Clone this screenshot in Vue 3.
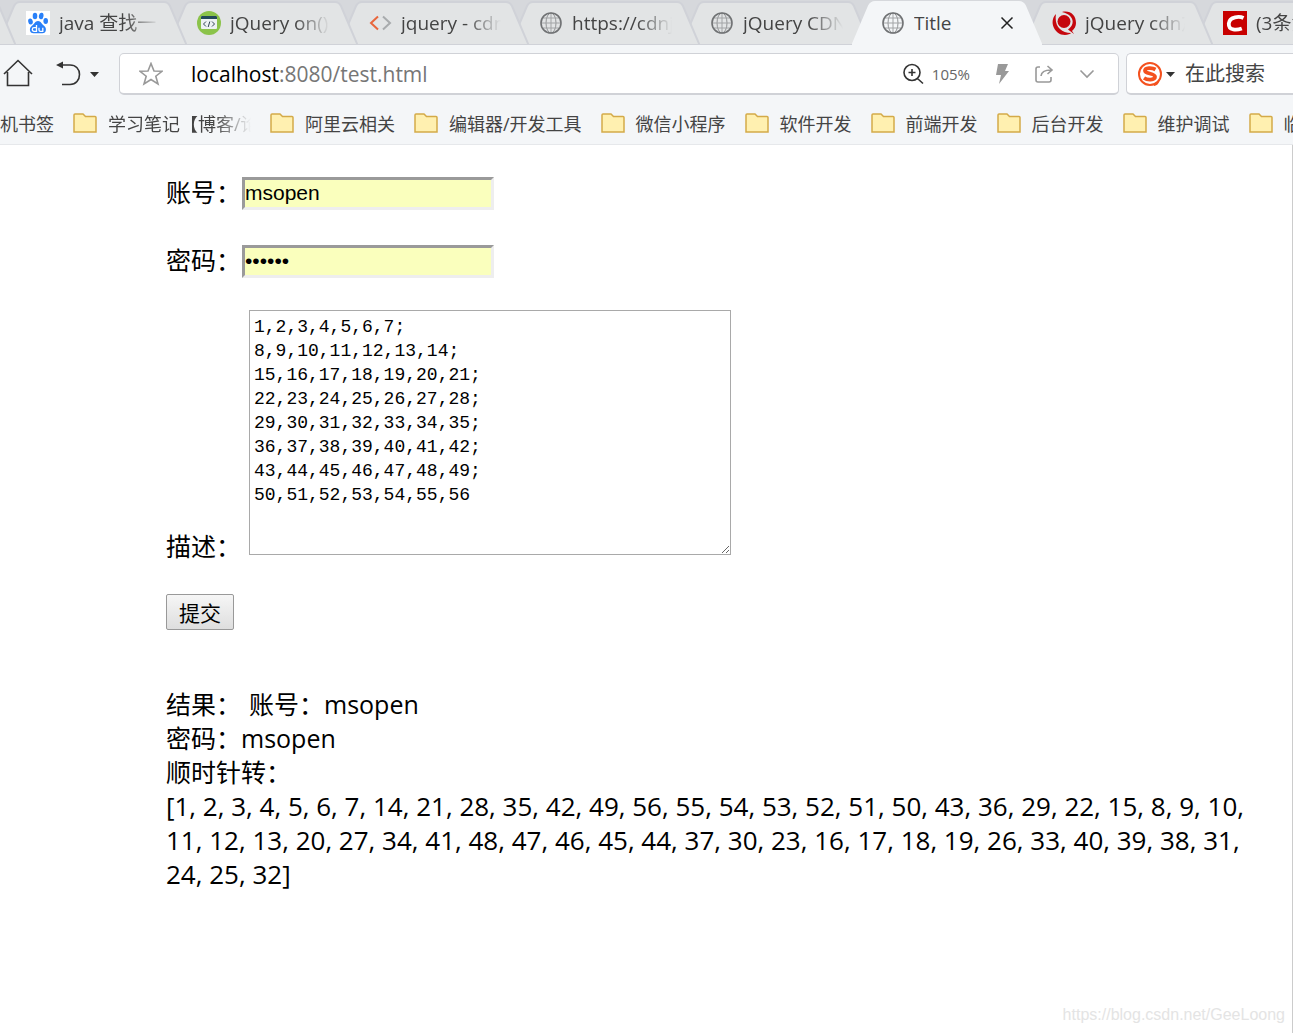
<template>
  <div class="browser">
    <nav class="tabs" aria-label="标签页">
      <a
        v-for="(tab, index) in tabs"
        :key="index"
        href="#"
        class="tab"
        :class="{ active: tab.active }"
        :style="{ zIndex: tab.active ? 20 : 10 - index }"
      >
        <svg class="tab-shape" viewBox="0 0 190 45" preserveAspectRatio="none">
          <path d="M0 46 L17 6 Q19 2 23 2 H167 Q171 2 173 6 L190 46" />
          <path v-if="!tab.active" class="tab-line" d="M0 44.500 H190" />
        </svg>

        <svg v-if="tab.icon === 'baidu'" class="tab-icon" viewBox="0 0 24 24">
          <rect width="24" height="24" fill="#fff" />
          <g fill="#2a80f8">
            <ellipse cx="4.500" cy="10.500" rx="2.300" ry="3" transform="rotate(-12 4.500 10.500)" />
            <ellipse cx="9" cy="5" rx="2.300" ry="3.200" />
            <ellipse cx="15.200" cy="5" rx="2.300" ry="3.200" transform="rotate(10 15.200 5)" />
            <ellipse cx="19.700" cy="10" rx="2.300" ry="3" />
            <path d="M12 10 C15 10 15.500 13 18 14.800 C21 17 20.500 22.300 16.500 22.300 H7.500 C3.300 22.300 2.800 17 6 14.800 C8.500 13 9 10 12 10Z" />
          </g>
          <path d="M10.500 14 V20.300 H8 Q6.300 20.300 6.300 18.500 Q6.300 16.700 8 16.700 H10.500 M13 16.700 V19 Q13 20.300 14.300 20.300 H16.800 V16.700" fill="none" stroke="#fff" stroke-width="1.300" />
        </svg>
        <svg v-else-if="tab.icon === 'code'" class="tab-icon" viewBox="0 0 24 24">
          <circle cx="12" cy="12" r="12" fill="#8bc34a" />
          <rect x="4" y="5" width="16" height="13" rx="1" fill="#eef2f3" />
          <path d="M4 8 V6 Q4 5 5 5 H19 Q20 5 20 6 V8Z" fill="#234a5a" />
          <path d="M9 10.500 L6.500 13 L9 15.500 M15 10.500 L17.500 13 L15 15.500 M12.800 10.500 L11.200 16" fill="none" stroke="#345" />
        </svg>
        <svg v-else-if="tab.icon === 'brackets'" class="tab-icon" viewBox="0 0 24 24">
          <path d="M10 5.500 L3 12 L10 18.500" fill="none" stroke="#e8663c" stroke-width="2" />
          <path d="M15 5.500 L22 12 L15 18.500" fill="none" stroke="#a8abad" stroke-width="2" />
        </svg>
        <svg v-else-if="tab.icon === 'globe'" class="tab-icon" viewBox="0 0 24 24" fill="none" stroke="#707274">
          <ellipse cx="12" cy="12" rx="5" ry="10" stroke="#929496" />
          <path d="M12 2 V22 M2 12 H22 M4 7 H20 M4 17 H20" stroke="#a2a4a6" />
          <circle cx="12" cy="12" r="10" stroke-width="1.600" />
        </svg>
        <svg v-else-if="tab.icon === 'runoob'" class="tab-icon" viewBox="0 0 24 24">
          <circle cx="12" cy="10.500" r="6.500" fill="#c5070d" />
          <path d="M4 3 C-2 9 0 19 9 23.500 C14 24.500 18 23.500 19 22 C9 22 2 15 4 3Z" fill="#c5070d" />
          <path d="M10 1 C18 -1 24 4 24 12 C24 15 22.500 18 20 20 L22 23 L16 18.500 C23 14 23 4 10 1Z" fill="#c5070d" />
        </svg>
        <svg v-else class="tab-icon" viewBox="0 0 24 24">
          <rect width="24" height="24" fill="#c80000" />
          <path d="M20.500 7 C17 5.300 6.500 5 5.800 12.500 C5.300 20 14 19.300 18.800 17.500" fill="none" stroke="#fff" stroke-width="3.800" />
        </svg>

        <span class="tab-title">{{ tab.title }}</span>
        <svg v-if="tab.active" class="tab-close" viewBox="0 0 14 14">
          <path d="M1.500 1.500 L12.500 12.500 M12.500 1.500 L1.500 12.500" />
        </svg>
      </a>
    </nav>

    <div class="toolbar">
      <button class="icon-button" aria-label="主页">
        <svg width="30" height="30" viewBox="0 0 30 30">
          <path d="M1 15 L15 1.500 L29 15 M4.500 13 V26.500 H25.500 V13" />
        </svg>
      </button>
      <button class="icon-button back" aria-label="后退">
        <svg width="44" height="30" viewBox="0 0 44 30">
          <path d="M3 6 H14 C20 6 23.500 10 23.500 15.500 C23.500 21 20 25.500 14 25.500 H6" />
          <path d="M0 6 L7 2.500 V9.500Z M34 13 H43 L38.500 18Z" class="filled" />
        </svg>
      </button>

      <div class="address">
        <button class="icon-button" aria-label="收藏">
          <svg width="24" height="24" viewBox="0 0 24 24" class="grey">
            <path d="M12 1.500 L15 9 L23 9.300 L16.800 14.200 L19 22 L12 17.500 L5 22 L7.200 14.200 L1 9.300 L9 9Z" />
          </svg>
        </button>
        <div class="url" role="textbox" contenteditable="true" spellcheck="false" aria-label="地址"><span class="host">localhost</span>:8080/test.html</div>
        <button class="zoom">
          <svg width="22" height="22" viewBox="0 0 22 22">
            <path d="M18 9.500 A8 8 0 1 1 2 9.500 A8 8 0 1 1 18 9.500 M15.500 15.500 L21 20.500 M10 6 V13 M6.500 9.500 H13.500" />
          </svg>
          105%
        </button>
        <button class="icon-button" aria-label="极速">
          <svg width="14" height="20" viewBox="0 0 14 20">
            <path d="M3 0 H13 L10 7 H14 L4 20 L6 11 H1Z" class="bolt" />
          </svg>
        </button>
        <button class="icon-button" aria-label="分享">
          <svg width="20" height="20" viewBox="0 0 20 20" class="grey">
            <path d="M6 3 H4 Q2 3 2 5 V16 Q2 18 4 18 H15 Q17 18 17 16 V13 M7 12 Q7.500 6 17 6 M13.500 2 L18 6 L13.500 10" />
          </svg>
        </button>
        <button class="icon-button" aria-label="更多">
          <svg width="16" height="10" viewBox="0 0 16 10" class="grey">
            <path d="M1.500 1.500 L8 8 L14.500 1.500" />
          </svg>
        </button>
      </div>

      <div class="search">
        <svg width="38" height="26" viewBox="0 0 38 26">
          <circle cx="13" cy="13" r="11" fill="none" stroke="#f4511e" stroke-width="2" />
          <path d="M18.500 8.500 C15 6.500 8 6.500 8 9.800 C8 13 18 12 18 15.800 C18 19.500 10 19 7 17" fill="none" stroke="#f4511e" stroke-width="3.800" />
          <path d="M17 24 Q20 24 21.500 20" fill="none" stroke="#f4511e" stroke-width="2" />
          <path d="M29 11 H38 L33.500 16Z" fill="#333" />
        </svg>
        <input type="text" placeholder="在此搜索" aria-label="在此搜索" />
      </div>
    </div>

    <nav class="bookmarks" aria-label="书签">
      <a v-for="bookmark in bookmarks" :key="bookmark.name" href="#" class="bookmark">
        <svg v-if="bookmark.folder" width="24" height="22" viewBox="0 0 24 22">
          <path d="M1 19 V2 Q1 1 2 1 H10 L12.500 3.500 H22 Q23 3.500 23 4.500 V19Z" fill="#fff0b0" stroke="#d4aa48" stroke-width="1.500" />
        </svg>
        <span :class="{ faded: bookmark.faded }">{{ bookmark.name }}</span>
      </a>
    </nav>

    <main class="page">
      <form @submit.prevent="submitForm">
        <div class="form-row">
          <label for="account">账号：</label>
          <input id="account" type="text" v-model="form.account" />
        </div>
        <div class="form-row">
          <label for="password">密码：</label>
          <input id="password" type="password" v-model="form.password" />
        </div>
        <div class="form-row description">
          <label for="description">描述：</label>
          <textarea id="description" v-model="form.description" spellcheck="false"></textarea>
        </div>
        <button type="submit" class="submit">提交</button>
      </form>

      <section class="result">
        <div><span class="result-label">结果：</span>账号：{{ result.account }}</div>
        <div>密码：{{ result.password }}</div>
        <div>顺时针转：</div>
        <div class="numbers">[{{ result.numbers.join(', ') }}]</div>
      </section>
      <span class="watermark">https://blog.csdn.net/GeeLoong</span>
    </main>
  </div>
</template>

<script setup>
import { reactive, ref } from 'vue';

const tabs = [
  { title: '', icon: 'globe' },
  { title: 'java 查找一', icon: 'baidu' },
  { title: 'jQuery on()', icon: 'code' },
  { title: 'jquery - cdn', icon: 'brackets' },
  { title: 'https://cdnj', icon: 'globe' },
  { title: 'jQuery CDN', icon: 'globe' },
  { title: 'Title', icon: 'globe', active: true },
  { title: 'jQuery cdn加', icon: 'runoob' },
  { title: '(3条消息)', icon: 'csdn' }
];

const bookmarks = [
  { name: '机书签' },
  { name: '学习笔记【博客/论', folder: true, faded: true },
  { name: '阿里云相关', folder: true },
  { name: '编辑器/开发工具', folder: true },
  { name: '微信小程序', folder: true },
  { name: '软件开发', folder: true },
  { name: '前端开发', folder: true },
  { name: '后台开发', folder: true },
  { name: '维护调试', folder: true },
  { name: '临时', folder: true }
];

const form = reactive({
  account: 'msopen',
  password: 'msopen',
  description: `1,2,3,4,5,6,7;
8,9,10,11,12,13,14;
15,16,17,18,19,20,21;
22,23,24,25,26,27,28;
29,30,31,32,33,34,35;
36,37,38,39,40,41,42;
43,44,45,46,47,48,49;
50,51,52,53,54,55,56`
});

// Walk the matrix clockwise, from the outside in
const spiral = (text) => {
  let rows = text.trim().split(';').map((row) => row.trim().split(','));
  const numbers = [];
  while (rows.length) {
    numbers.push(...rows.shift());
    // rotate what is left counter-clockwise
    rows = rows.length ? rows[0].map((_, i) => rows.map((row) => row[i])).reverse() : [];
  }
  return numbers;
};

const getResult = () => ({
  account: form.account,
  password: form.password,
  numbers: spiral(form.description)
});

const result = ref(getResult());

const submitForm = () => {
  result.value = getResult();
};
</script>

<style>
body {
  margin: 0;
  background: #fff;
}
</style>

<style scoped>
.browser {
  display: flex;
  flex-direction: column;
  min-height: 100vh;
  overflow: hidden;
  font-family: "Open Sans", "Noto Sans CJK SC", sans-serif;
  color: #444;
}

a {
  color: inherit;
  text-decoration: none;
}

button {
  font-family: inherit;
  cursor: pointer;
}

svg {
  flex: none;
}

/* Tabs */
.tabs {
  display: flex;
  height: 45px;
  margin-left: -174px;
  background: #d6d8dc;
}

.tab {
  position: relative;
  display: flex;
  flex: none;
  align-items: center;
  box-sizing: border-box;
  width: 190px;
  height: 45px;
  margin-right: -19px;
  padding: 1px 28px 0 29px;
  font-size: 19px;
  line-height: 28px;
}

.tab-shape {
  position: absolute;
  top: 0;
  left: 0;
  width: 100%;
  height: 100%;
  fill: #e2e4e5;
  stroke: #d0d2d8;
  stroke-width: 2;
}

.tab-line {
  stroke-width: 1;
}

.active .tab-shape {
  fill: #f4f6f8;
  stroke: #f4f6f8;
}

.tab-icon {
  position: relative;
  width: 24px;
  height: 24px;
  margin-right: 9px;
}

.tab-title {
  position: relative;
  flex: 1;
  overflow: hidden;
  white-space: nowrap;
  mask-image: linear-gradient(90deg, #000 65%, transparent);
}

.active .tab-title {
  mask-image: none;
}

.tab-close {
  position: relative;
  width: 14px;
  height: 14px;
  stroke: #222;
  stroke-width: 1.5;
}

/* Address bar */
.toolbar {
  display: flex;
  align-items: center;
  padding: 8px 0 0 3px;
  background: #f4f6f8;
}

.icon-button,
.zoom {
  display: flex;
  align-items: center;
  padding: 0;
  border: 0;
  background: none;
}

.icon-button svg,
.zoom svg {
  fill: none;
  stroke: #333;
  stroke-width: 1.6;
}

.icon-button .grey {
  stroke: #999;
}

.icon-button .filled {
  fill: #333;
  stroke: none;
}

.icon-button .bolt {
  fill: #999;
  stroke: none;
}

.back {
  margin: 0 19px 0 23px;
}

.address,
.search {
  display: flex;
  align-items: center;
  box-sizing: border-box;
  height: 42px;
  border: 1px solid #d0d2d7;
  border-bottom-width: 2px;
  border-radius: 5px;
  background: #fff;
}

.address {
  flex: 1;
  gap: 25px;
  padding: 0 23px 0 19px;
}

.url {
  flex: 1;
  margin-left: 3px;
  font-size: 21px;
  line-height: 30px;
  white-space: nowrap;
  color: #767676;
  outline: none;
}

.host {
  color: #000;
}

.zoom {
  gap: 8px;
  font-size: 15px;
  color: #666;
}

.search {
  width: 167px;
  margin-left: 7px;
  padding-left: 10px;
  border-right: 0;
  border-radius: 5px 0 0 5px;
}

.search input {
  width: 100px;
  margin-left: 10px;
  padding: 0;
  border: 0;
  font: 20px "Open Sans", "Noto Sans CJK SC", sans-serif;
  outline: none;
}

.search input::placeholder {
  color: #444;
}

/* Bookmarks */
.bookmarks {
  display: flex;
  gap: 19px;
  align-items: center;
  box-sizing: border-box;
  height: 50px;
  padding-top: 8px;
  border-bottom: 1px solid #e6e8eb;
  background: #f4f6f8;
  font-size: 18px;
  line-height: 28px;
  white-space: nowrap;
}

.bookmark {
  display: flex;
  flex: none;
  gap: 11px;
  align-items: center;
}

.faded {
  width: 143px;
  overflow: hidden;
  mask-image: linear-gradient(90deg, #000 75%, transparent);
}

/* Page */
.page {
  position: relative;
  flex: 1;
  padding: 32px 44px 60px 166px;
  border-right: 1px solid #ccc;
  font-size: 25px;
  line-height: 34px;
  color: #000;
}

.form-row {
  display: flex;
  align-items: center;
  margin-bottom: 35px;
}

.form-row label {
  width: 76px;
  line-height: 31px;
  padding-bottom: 2px;
}

.form-row input {
  box-sizing: border-box;
  width: 252px;
  height: 33px;
  padding: 0 0 1px;
  border: 3px inset #eee;
  background: #faffbd;
  font: 21px "Liberation Sans", Arial, sans-serif;
}

.form-row.description {
  align-items: flex-end;
  margin: -3px 0 39px;
}

.description label {
  margin-bottom: -9px;
}

.description textarea {
  box-sizing: border-box;
  width: 482px;
  height: 245px;
  margin-left: 7px;
  padding: 4px;
  border: 1px solid #a9a9a9;
  font: 18px/24px "Liberation Mono", "Courier New", monospace;
}

.submit {
  display: block;
  height: 36px;
  padding: 1px 12px 0;
  border: 1px solid #999;
  border-radius: 2px;
  background: linear-gradient(#f6f6f6, #dedede);
  font-size: 21px;
  line-height: 32px;
  color: #000;
}

.result {
  margin-top: 57px;
}

.result-label {
  margin-right: 8px;
}

.numbers {
  font-size: 26px;
}

.watermark {
  position: absolute;
  right: 7px;
  bottom: 6px;
  font: 16px/24px "Liberation Sans", Arial, sans-serif;
  color: #e4e4e4;
}
</style>
